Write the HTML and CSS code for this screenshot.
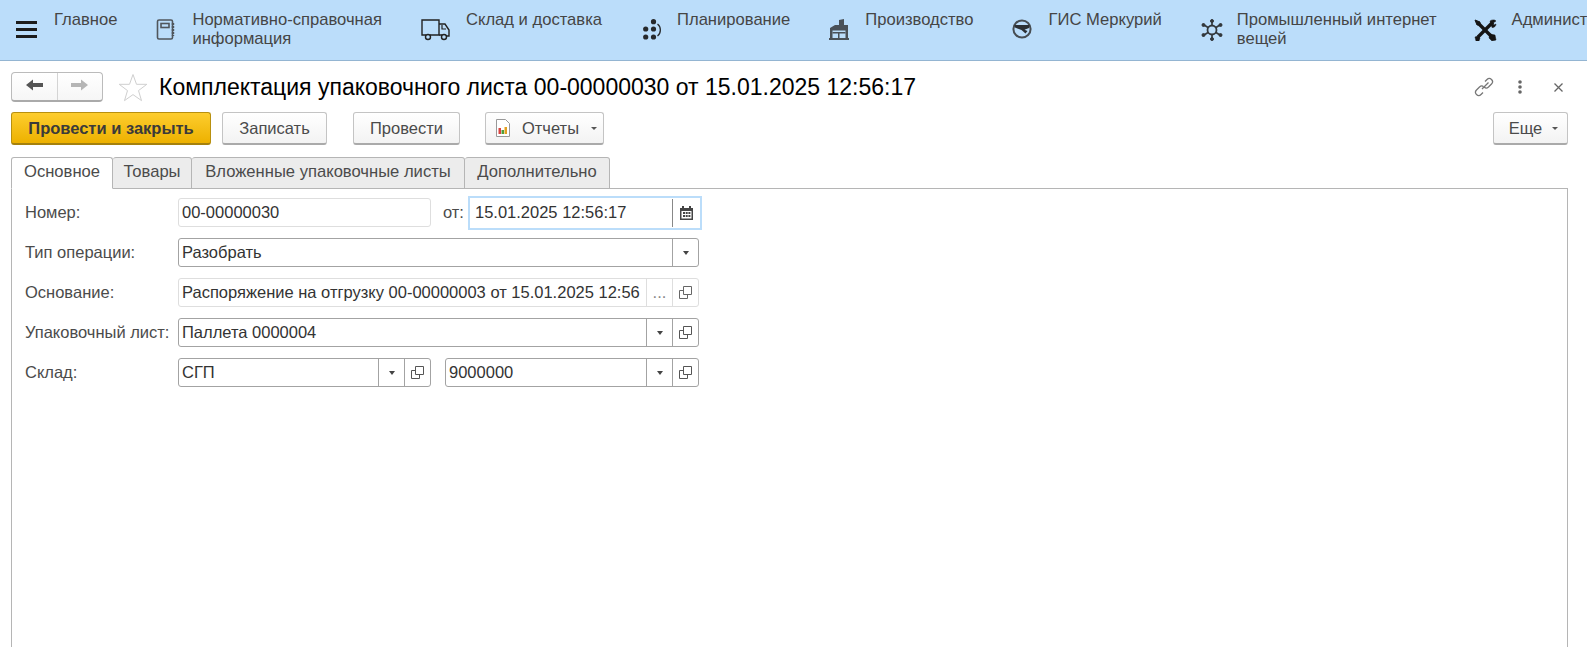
FILE: index.html
```html
<!DOCTYPE html>
<html lang="ru">
<head>
  <meta charset="UTF-8">
  <title>Комплектация упаковочного листа</title>
  <link rel="stylesheet" href="styles.css">
</head>
<body>

<header class="topbar">
  <a class="nav-item nav-burger">
    <span class="nav-icon">
      <svg width="21" height="17" viewBox="0 0 21 17"><path d="M0 1.500h21M0 8.500h21M0 15.500h21" stroke="#1c1c1c" stroke-width="3"/></svg>
    </span>
    <span class="nav-text">Главное</span>
  </a>
  <a class="nav-item">
    <span class="nav-icon">
      <svg width="20" height="21" viewBox="0 0 20 21" fill="none" stroke="#50565c" stroke-width="1.600"><rect x="1.500" y="1" width="15" height="19" rx="1.500"/><rect x="5" y="4.500" width="8" height="4"/><path d="M17 4v13" stroke-width="2.400" stroke-dasharray="2 1"/></svg>
    </span>
    <span class="nav-text">Нормативно-справочная<br>информация</span>
  </a>
  <a class="nav-item nav-wide">
    <span class="nav-icon">
      <svg width="29" height="22" viewBox="0 0 29 22" fill="none" stroke="#222" stroke-width="1.400"><path d="M5 16H1V1h17v15H9"/><path d="M18 5h6l4 6v6h-3M18 16h3"/><path d="M21 6v4h4" stroke-width="1.200"/><circle cx="7" cy="18" r="2.500"/><circle cx="23" cy="18" r="2.500"/></svg>
    </span>
    <span class="nav-text">Склад и доставка</span>
  </a>
  <a class="nav-item nav-plan">
    <span class="nav-icon">
      <svg width="19" height="21" viewBox="0 0 19 21" fill="#26292c"><circle cx="10.500" cy="2.700" r="2.600"/><circle cx="2.700" cy="10" r="2.600"/><circle cx="10.500" cy="10" r="2.600"/><circle cx="2.700" cy="18" r="2.600"/><circle cx="10.500" cy="18" r="2.600"/><path d="M14.500 5c3.800 3 3.800 9 0 12" fill="none" stroke="#26292c" stroke-width="1.300"/></svg>
    </span>
    <span class="nav-text">Планирование</span>
  </a>
  <a class="nav-item">
    <span class="nav-icon">
      <svg width="20" height="21" viewBox="0 0 20 21" fill="#4a5158"><path d="M10 1l5-1v6h4v15H1V9l5-3 4 0z"/><path d="M3.500 11.500h13V19h-13z" fill="#bbddfa"/><path d="M3.500 13h13v1.500h-13zM9 13h1.500v6H9z"/><path d="M0 19h20v2H0z"/></svg>
    </span>
    <span class="nav-text">Производство</span>
  </a>
  <a class="nav-item">
    <span class="nav-icon">
      <svg width="20" height="20" viewBox="0 0 20 20"><circle cx="10" cy="10" r="8.600" fill="none" stroke="#474d52" stroke-width="2"/><path d="M2.500 6h15l-.5 3-4.500 1.800 3 1.200-2 2.500-4-3.500-6.500-2.500z" fill="#2c3034"/></svg>
    </span>
    <span class="nav-text">ГИС Меркурий</span>
  </a>
  <a class="nav-item">
    <span class="nav-icon">
      <svg width="22" height="22" viewBox="0 0 22 22" fill="#33383c" stroke="#33383c"><path d="M11 1v20M1.500 5l19 12M20.500 5l-19 12" stroke-width="1.700"/><circle cx="11" cy="11" r="4.500" fill="#bbddfa" stroke-width="1.800"/><circle cx="11" cy="2" r="1.500"/><circle cx="11" cy="20" r="1.500"/><circle cx="2.500" cy="6" r="1.500"/><circle cx="19.500" cy="6" r="1.500"/><circle cx="2.500" cy="16" r="1.500"/><circle cx="19.500" cy="16" r="1.500"/></svg>
    </span>
    <span class="nav-text">Промышленный интернет<br>вещей</span>
  </a>
  <a class="nav-item nav-tools">
    <span class="nav-icon">
      <svg width="23" height="22" viewBox="0 0 23 22" fill="none" stroke="#151515"><path d="M4 4l15 15" stroke-width="3.400"/><path d="M19 3L4 18" stroke-width="3.400"/><path d="M1 1l5 2 0 3-3 0z" fill="#151515" stroke-width="1"/><path d="M16 2c2-1.500 5-1.500 6 0l-3 2 1 2 2-1c0 2-2 4-4 3.500z" fill="#151515" stroke-width=".5"/><path d="M16 15l5 1 1 5-4 1-3-3z" fill="#151515" stroke-width=".5"/><path d="M1 18l3-1 2 2-1 3H2z" fill="#151515" stroke-width=".5"/></svg>
    </span>
    <span class="nav-text">Администрирование</span>
  </a>
</header>

<main class="form">
  <div class="titlebar">
    <div class="history">
      <button class="history-btn">
        <svg width="17" height="12" viewBox="0 0 17 12"><path d="M0 6l7-5.500V4h10v4H7v3.500z" fill="#555"/></svg>
      </button>
      <button class="history-btn">
        <svg width="17" height="12" viewBox="0 0 17 12"><path d="M17 6l-7-5.500V4H0v4h10v3.500z" fill="#b5b5b5"/></svg>
      </button>
    </div>
    <svg class="star" width="30" height="29" viewBox="0 0 30 29"><path d="M15 1.500l3.500 9.800h10.300l-8.300 6.300 3 10-8.500-6-8.500 6 3-10-8.300-6.300h10.300z" fill="#fff" stroke="#cfcfcf"/></svg>
    <h1 class="title">Комплектация упаковочного листа 00-00000030 от 15.01.2025 12:56:17</h1>
    <div class="title-tools">
      <svg class="tool-link" width="20" height="20" viewBox="0 0 20 20" fill="none" stroke="#777" stroke-width="1.300"><path d="M8 12l6.500-6.500M11 4.500l2-2c1.500-1.500 3-1.500 4.500 0s1.500 3 0 4.500l-3 3c-1.500 1.300-3 1.300-4 .3"/><path d="M9 15.500l-2 2c-1.500 1.500-3 1.500-4.500 0s-1.500-3 0-4.500l3-3c1.500-1.300 3-1.300 4-.3"/></svg>
      <svg class="tool-dots" width="4" height="14" viewBox="0 0 4 14" fill="#666"><circle cx="2" cy="2" r="1.800"/><circle cx="2" cy="7" r="1.800"/><circle cx="2" cy="12" r="1.800"/></svg>
      <svg width="9" height="9" viewBox="0 0 9 9" stroke="#666" stroke-width="1.300"><path d="M.5.500l8 8M8.500.500l-8 8"/></svg>
    </div>
  </div>

  <div class="cmdbar">
    <button class="btn btn-primary">Провести и закрыть</button>
    <button class="btn btn-write">Записать</button>
    <button class="btn btn-post">Провести</button>
    <button class="btn btn-reports">
      <svg width="14" height="18" viewBox="0 0 14 18"><path d="M.5.500h9l4 4v13H.5z" fill="#fff" stroke="#999"/><path d="M2.500 9h2.500v6H2.500z" fill="#d9433f"/><path d="M5.500 11H8v4H5.500z" fill="#4f9f3c"/><path d="M8.500 8H11v7H8.500z" fill="#e2a020"/></svg>
      Отчеты <i class="caret"></i>
    </button>
    <button class="btn btn-more">Еще <i class="caret"></i></button>
  </div>

  <div class="tabs">
    <div class="tab tab-active">Основное</div>
    <div class="tab tab-goods">Товары</div>
    <div class="tab tab-nested">Вложенные упаковочные листы</div>
    <div class="tab tab-extra">Дополнительно</div>
  </div>

  <section class="panel">
    <div class="row">
      <label class="label">Номер:</label>
      <div class="field field-off field-number"><span class="value">00-00000030</span></div>
      <label class="label-from">от:</label>
      <div class="field field-focus field-date">
        <span class="value">15.01.2025 12:56:17</span>
        <span class="addon">
          <svg width="13" height="14" viewBox="0 0 13 14" fill="#444"><path d="M0 2h2V0h2v2h5V0h2v2h2v12H0zM1.500 5v7.500h10V5z"/><path d="M3 6h2v2H3zM5.700 6h2v2h-2zM8.400 6h2v2h-2zM3 9h2v2H3zM5.700 9h2v2h-2zM8.400 9h2v2h-2z"/></svg>
        </span>
      </div>
    </div>
    <div class="row">
      <label class="label">Тип операции:</label>
      <div class="field field-grow">
        <span class="value">Разобрать</span>
        <span class="addon"><i class="caret caret-dark"></i></span>
      </div>
    </div>
    <div class="row">
      <label class="label">Основание:</label>
      <div class="field field-off field-grow">
        <span class="value">Распоряжение на отгрузку 00-00000003 от 15.01.2025 12:56</span>
        <span class="addon addon-dots">...</span>
        <span class="addon"><svg class="copy" width="13" height="13" viewBox="0 0 13 13" fill="none" stroke="#666"><path d="M4.500.500h8v8h-8zM4.500 4.500H.500v8h8V8.500"/></svg></span>
      </div>
    </div>
    <div class="row">
      <label class="label">Упаковочный лист:</label>
      <div class="field field-grow">
        <span class="value">Паллета 0000004</span>
        <span class="addon"><i class="caret caret-dark"></i></span>
        <span class="addon"><svg class="copy" width="13" height="13" viewBox="0 0 13 13" fill="none" stroke="#555"><path d="M4.500.500h8v8h-8zM4.500 4.500H.500v8h8V8.500"/></svg></span>
      </div>
    </div>
    <div class="row">
      <label class="label">Склад:</label>
      <div class="field field-store">
        <span class="value">СГП</span>
        <span class="addon"><i class="caret caret-dark"></i></span>
        <span class="addon"><svg class="copy" width="13" height="13" viewBox="0 0 13 13" fill="none" stroke="#555"><path d="M4.500.500h8v8h-8zM4.500 4.500H.500v8h8V8.500"/></svg></span>
      </div>
      <div class="field field-cell">
        <span class="value">9000000</span>
        <span class="addon"><i class="caret caret-dark"></i></span>
        <span class="addon"><svg class="copy" width="13" height="13" viewBox="0 0 13 13" fill="none" stroke="#555"><path d="M4.500.500h8v8h-8zM4.500 4.500H.500v8h8V8.500"/></svg></span>
      </div>
    </div>
  </section>
</main>

</body>
</html>
```

FILE: styles.css
```css
html, body {
  height: 100%;
}
body {
  margin: 0;
  display: flex;
  flex-direction: column;
  overflow: hidden;
  background: #fff;
  font-family: "Liberation Sans", Arial, sans-serif;
  font-size: 16.5px;
  color: #4b4b4b;
}

/* top sections */
.topbar {
  display: flex;
  flex: none;
  height: 60px;
  padding-left: 16px;
  gap: 39px;
  background: #bbddfa;
  border-bottom: 1px solid #94b5d2;
  font-size: 16.6px;
  overflow: hidden;
  white-space: nowrap;
}
.nav-item {
  display: flex;
  flex: none;
  color: #454545;
}
.nav-icon {
  width: 36px;
  padding-top: 19px;
}
.nav-icon svg {
  display: block;
}
.nav-wide .nav-icon {
  width: 45px;
}
.nav-plan .nav-icon svg {
  margin-left: 2px;
}
.nav-tools .nav-icon svg {
  margin-left: -2px;
}
.nav-burger .nav-icon {
  width: 38px;
  padding-top: 21px;
}
.nav-text {
  padding-top: 10px;
  line-height: 19px;
}

/* form */
.form {
  display: flex;
  flex: 1;
  flex-direction: column;
  min-height: 0;
  padding: 0 19px 0 11px;
}
.titlebar {
  display: flex;
  flex: none;
  align-items: center;
  height: 30px;
  margin-top: 11px;
}
.history {
  display: flex;
  width: 92px;
  height: 30px;
  box-sizing: border-box;
  border: 1px solid #bbb;
  border-bottom: 2px solid #aaa;
  border-radius: 4px;
  background: linear-gradient(#fff, #f6f6f6);
}
.history-btn {
  flex: 1;
  padding: 0;
  border: none;
  background: none;
}
.history-btn + .history-btn {
  border-left: 1px solid #d4d4d4;
}
.star {
  margin-left: 15px;
}
.title {
  margin: 0 0 0 11px;
  font-size: 23px;
  font-weight: normal;
  color: #000;
  white-space: nowrap;
}
.title-tools {
  display: flex;
  align-items: center;
  margin-left: auto;
  padding-right: 5px;
}
.tool-link {
  margin-right: 24px;
}
.tool-dots {
  margin-right: 32px;
}

.cmdbar {
  display: flex;
  flex: none;
  margin-top: 10px;
  height: 33px;
}
.btn {
  display: flex;
  align-items: center;
  justify-content: center;
  gap: 10px;
  height: 33px;
  padding: 0;
  box-sizing: border-box;
  border: 1px solid #c4c4c4;
  border-bottom: 2px solid #aaa;
  border-radius: 3px;
  background: linear-gradient(#fff, #f3f3f3);
  font: inherit;
  color: #4b4b4b;
}
.btn-primary {
  width: 200px;
  border-color: #b8900f;
  border-bottom-color: #a5810d;
  background: linear-gradient(#fdcd2e, #edb100);
  font-weight: bold;
  color: #3a3a3a;
}
.btn-write {
  width: 105px;
  margin-left: 11px;
}
.btn-post {
  width: 107px;
  margin-left: 26px;
}
.btn-reports {
  width: 119px;
  margin-left: 25px;
  padding-left: 4px;
  gap: 12px;
}
.btn-more {
  width: 75px;
  margin-left: auto;
  padding-left: 6px;
  gap: 10px;
}
.caret {
  display: inline-block;
  width: 0;
  height: 0;
  border-left: 3px solid transparent;
  border-right: 3px solid transparent;
  border-top: 3px solid #555;
}
.caret-dark {
  border-left-width: 3.5px;
  border-right-width: 3.5px;
  border-top-width: 4px;
  border-top-color: #444;
}

/* tabs */
.tabs {
  display: flex;
  flex: none;
  height: 32px;
  margin-top: 12px;
  margin-bottom: -1px;
  position: relative;
  z-index: 1;
  font-size: 16.6px;
}
.tab {
  line-height: 28px;
  text-align: center;
  box-sizing: border-box;
  height: 32px;
  border: 1px solid #b5b5b5;
  border-left-width: 0;
  border-radius: 3px 3px 0 0;
  background: #ececec;
  color: #4b4b4b;
}
.tab-active {
  width: 102px;
  border-left-width: 1px;
  border-bottom-color: #fff;
  background: #fff;
}
.tab-goods {
  width: 79px;
}
.tab-nested {
  width: 273px;
}
.tab-extra {
  width: 145px;
}

.panel {
  flex: 1;
  display: flex;
  flex-direction: column;
  gap: 11px;
  margin-bottom: -3px;
  padding: 9px 0 0 13px;
  border: 1px solid #b5b5b5;
}
.row {
  display: flex;
  align-items: center;
  height: 29px;
}
.label {
  flex: none;
  width: 153px;
  color: #4b4b4b;
}
.label-from {
  margin: 0 4px 0 12px;
}

/* inputs */
.field {
  display: flex;
  align-items: stretch;
  height: 29px;
  box-sizing: border-box;
  border: 1px solid #a3a3a3;
  border-radius: 3px;
  background: #fff;
  color: #333;
}
.value {
  flex: 1;
  min-width: 0;
  padding-left: 3px;
  line-height: 27px;
  white-space: nowrap;
  overflow: hidden;
}
.addon {
  display: flex;
  align-items: center;
  justify-content: center;
  flex: none;
  width: 25px;
  border-left: 1px solid #a3a3a3;
}
.field-off {
  border-color: #dedede;
}
.field-off .addon {
  border-left-color: #dedede;
}
.addon-dots {
  color: #888;
}
.field-number {
  width: 253px;
}
.field-date {
  width: 234px;
  height: 34px;
  border: 2px solid #bbddfa;
  border-radius: 0;
}
.field-date .value {
  padding-left: 5px;
  line-height: 29px;
}
.field-date .addon {
  margin: 1px 0;
  width: 27px;
  border-left-color: #888;
}
.field-grow {
  width: 521px;
}
.field-store {
  width: 253px;
}
.field-cell {
  width: 254px;
  margin-left: 14px;
}
```
